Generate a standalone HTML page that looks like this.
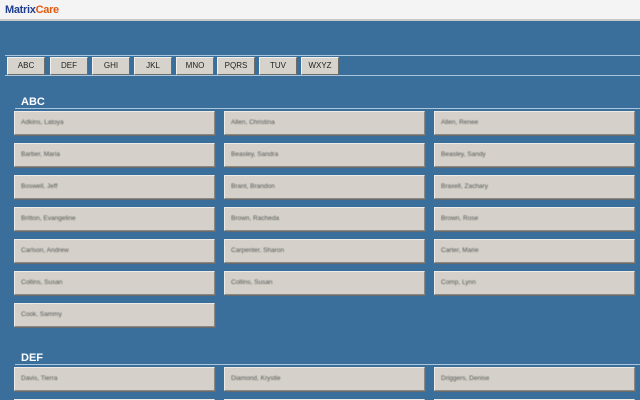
<!DOCTYPE html>
<html style="width:640px;height:400px;overflow:hidden"><head><meta charset="utf-8"><style>
*{margin:0;padding:0;box-sizing:border-box}
html,body{width:640px;height:400px;overflow:hidden}
body{background:#3a6f9c;font-family:"Liberation Sans",sans-serif;position:relative}
.hdr{position:absolute;left:0;top:0;width:640px;height:21px;background:#f4f4f4;border-bottom:2px solid #c8c8c8}
.logo{position:absolute;left:5px;top:4px;font-size:11px;font-weight:bold;letter-spacing:-0.3px}
.logo .m{color:#1f3f8f}.logo .c{color:#e05a10}
.hl{position:absolute;height:1px;background:#a9c6de}
.tab{position:absolute;top:57px;width:38px;height:18px;background:#d6d3cc;border:1px solid;border-color:#f2f0ec #6e6c68 #6e6c68 #f2f0ec;font-size:8px;color:#222;text-align:center;line-height:16px}
.sec{position:absolute;left:21px;color:#fff;font-weight:bold;font-size:11px}
.b{position:absolute;width:201px;height:24px;background:#d5d1ca;border:1px solid;border-color:#eeebe6 #8a8884 #8a8884 #eeebe6;box-shadow:1px 1px 0 #6a6a6a}
.b span{position:absolute;left:6px;top:7px;font-size:6.5px;color:#555;filter:blur(0.6px)}
</style></head><body>
<div class="hdr"><div class="logo"><span class="m">Matrix</span><span class="c">Care</span></div></div>
<div class="hl" style="left:5px;top:55px;width:635px"></div>
<div class="hl" style="left:5px;top:75px;width:635px"></div>
<div class="tab" style="left:7px">ABC</div>
<div class="tab" style="left:50px">DEF</div>
<div class="tab" style="left:92px">GHI</div>
<div class="tab" style="left:134px">JKL</div>
<div class="tab" style="left:176px">MNO</div>
<div class="tab" style="left:217px">PQRS</div>
<div class="tab" style="left:259px">TUV</div>
<div class="tab" style="left:301px">WXYZ</div>
<div class="sec" style="top:96px">ABC</div>
<div class="hl" style="left:15px;top:108px;width:625px"></div>
<div class="b" style="left:14px;top:111px"><span>Adkins, Latoya</span></div>
<div class="b" style="left:224px;top:111px"><span>Allen, Christina</span></div>
<div class="b" style="left:434px;top:111px"><span>Allen, Renee</span></div>
<div class="b" style="left:14px;top:143px"><span>Barber, Maria</span></div>
<div class="b" style="left:224px;top:143px"><span>Beasley, Sandra</span></div>
<div class="b" style="left:434px;top:143px"><span>Beasley, Sandy</span></div>
<div class="b" style="left:14px;top:175px"><span>Boswell, Jeff</span></div>
<div class="b" style="left:224px;top:175px"><span>Brant, Brandon</span></div>
<div class="b" style="left:434px;top:175px"><span>Braxell, Zachary</span></div>
<div class="b" style="left:14px;top:207px"><span>Britton, Evangeline</span></div>
<div class="b" style="left:224px;top:207px"><span>Brown, Racheda</span></div>
<div class="b" style="left:434px;top:207px"><span>Brown, Rose</span></div>
<div class="b" style="left:14px;top:239px"><span>Carlson, Andrew</span></div>
<div class="b" style="left:224px;top:239px"><span>Carpenter, Sharon</span></div>
<div class="b" style="left:434px;top:239px"><span>Carter, Marie</span></div>
<div class="b" style="left:14px;top:271px"><span>Collins, Susan</span></div>
<div class="b" style="left:224px;top:271px"><span>Collins, Susan</span></div>
<div class="b" style="left:434px;top:271px"><span>Comp, Lynn</span></div>
<div class="b" style="left:14px;top:303px"><span>Cook, Sammy</span></div>
<div class="sec" style="top:352px">DEF</div>
<div class="hl" style="left:15px;top:364px;width:625px"></div>
<div class="b" style="left:14px;top:367px"><span>Davis, Tierra</span></div>
<div class="b" style="left:224px;top:367px"><span>Diamond, Krystle</span></div>
<div class="b" style="left:434px;top:367px"><span>Driggers, Denise</span></div>
<div class="b" style="left:14px;top:399px;height:1px"></div>
<div class="b" style="left:224px;top:399px;height:1px"></div>
<div class="b" style="left:434px;top:399px;height:1px"></div>
</body></html>
